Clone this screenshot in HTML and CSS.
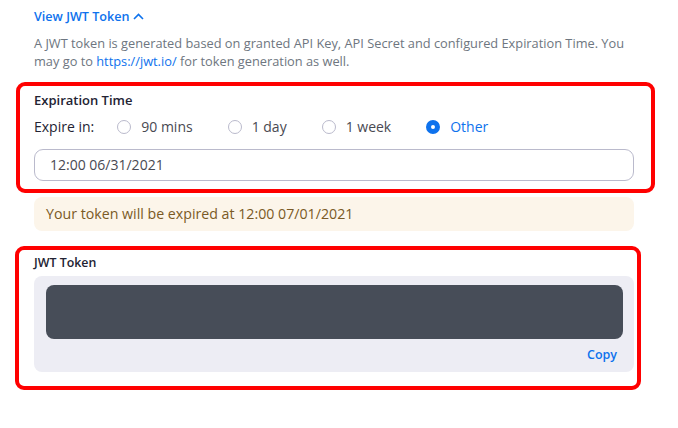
FILE: index.html
```html
<!DOCTYPE html>
<html>
<head>
<meta charset="utf-8">
<link rel="stylesheet" href="styles.css">
</head>
<body>
<div class="page">
  <a class="toggle" href="#">View JWT Token
    <svg class="chev" width="11" height="7" viewBox="0 0 11 7"><path d="M1 6 L5.5 1.5 L10 6" fill="none" stroke="#0e72ed" stroke-width="1.6"/></svg>
  </a>
  <p class="desc">A JWT token is generated based on granted API Key, API Secret and configured Expiration Time. You may go to <a href="#" class="link">https://jwt.io/</a> for token generation as well.</p>

  <section class="mark mark-exp">
    <div class="label">Expiration Time</div>
    <div class="radios">
      <span class="expire">Expire in:</span>
      <label class="opt"><span class="radio"></span><span>90 mins</span></label>
      <label class="opt"><span class="radio"></span><span>1 day</span></label>
      <label class="opt"><span class="radio"></span><span>1 week</span></label>
      <label class="opt opt-on"><span class="radio radio-on"></span><span>Other</span></label>
    </div>
    <div class="input">12:00 06/31/2021</div>
  </section>

  <div class="alert">Your token will be expired at 12:00 07/01/2021</div>

  <section class="mark mark-jwt">
    <div class="label label-sm">JWT Token</div>
    <div class="tokenbox">
      <div class="token"></div>
      <div class="copyrow"><a href="#" class="copy">Copy</a></div>
    </div>
  </section>
</div>
</body>
</html>
```

FILE: styles.css
```css
* { box-sizing: border-box; }
html, body { margin: 0; padding: 0; background: #fff; }
body { font-family: "Open Sans", "Noto Sans", sans-serif; color: #232333; }
.page { width: 634px; padding: 8px 0 0 34px; }
a { text-decoration: none; }
.toggle { display: flex; align-items: center; gap: 3px; color: #0e72ed; font-size: 12.6px; font-weight: 600; line-height: 18px; }
.chev { margin-top: -1px; }
.desc { margin: 8px 0 0; font-size: 12.8px; line-height: 18px; color: #6e7680; }
.link { color: #0e72ed; }
.mark { border: 4px solid #ff0000; border-radius: 9px; }
.mark-exp { margin: 12px -21px 0 -18px; padding: 6px 17px 8px 14px; }
.label { font-size: 13px; font-weight: 600; line-height: 16px; color: #232333; }
.label-sm { font-size: 12.4px; }
.radios { display: flex; align-items: center; height: 20px; margin-top: 9px; font-size: 14px; line-height: 20px; }
.expire { color: #232333; margin-right: 23px; }
.opt { display: flex; align-items: center; gap: 10px; margin-right: 35px; color: #494952; }
.opt-on { color: #0e72ed; }
.radio { width: 14px; height: 14px; border: 1px solid #babacc; border-radius: 50%; display: inline-block; }
.radio-on { border: 5px solid #0e72ed; background: #fff; }
.input { margin-top: 12px; height: 32px; border: 1px solid #babacc; border-radius: 9px; padding-left: 15px; font-size: 14px; line-height: 30px; color: #494952; }
.alert { margin-top: 4px; width: 600px; height: 34px; background: #fcf5ea; border-radius: 8px; padding-left: 12px; font-size: 14.2px; line-height: 34px; color: #7a5a25; }
.mark-jwt { margin: 15px -7px 0 -19px; padding: 5px 3px 14px 15px; }
.tokenbox { margin-top: 5px; background: #ededf4; border-radius: 8px; padding: 9px 11px 9px 12px; }
.token { height: 54px; background: #474d58; border-radius: 8px; }
.copyrow { display: flex; justify-content: flex-end; margin-top: 8px; padding-right: 6px; }
.copy { color: #0e72ed; font-size: 12.5px; font-weight: 600; line-height: 16px; }
```
